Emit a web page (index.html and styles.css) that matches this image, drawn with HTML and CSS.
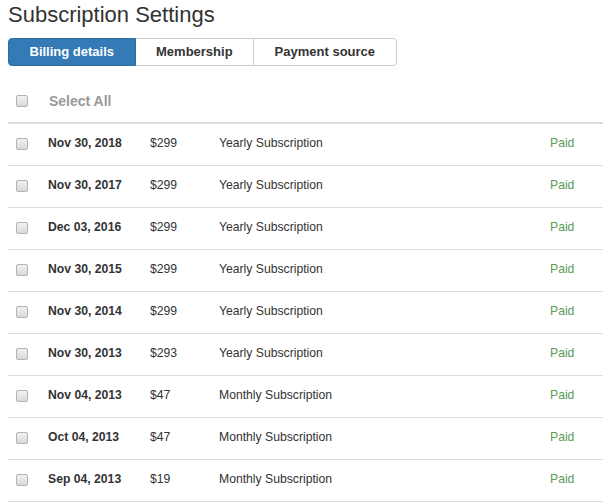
FILE: index.html
```html
<!DOCTYPE html>
<html>
<head>
<meta charset="utf-8">
<link rel="stylesheet" href="styles.css">
</head>
<body>
<h1 class="title">Subscription Settings</h1>
<div class="btn-group">
  <button class="btn btn-active">Billing details</button>
  <button class="btn">Membership</button>
  <button class="btn">Payment source</button>
</div>
<table class="billing">
  <colgroup>
    <col class="c-check">
    <col class="c-date">
    <col class="c-price">
    <col class="c-desc">
    <col class="c-status">
  </colgroup>
  <thead>
    <tr>
      <th class="cell-check"><input type="checkbox" class="cb"></th>
      <th colspan="4" class="select-all">Select All</th>
    </tr>
  </thead>
  <tbody>
    <tr><td class="cell-check"><input type="checkbox" class="cb"></td><td class="date">Nov 30, 2018</td><td>$299</td><td>Yearly Subscription</td><td class="paid">Paid</td></tr>
    <tr><td class="cell-check"><input type="checkbox" class="cb"></td><td class="date">Nov 30, 2017</td><td>$299</td><td>Yearly Subscription</td><td class="paid">Paid</td></tr>
    <tr><td class="cell-check"><input type="checkbox" class="cb"></td><td class="date">Dec 03, 2016</td><td>$299</td><td>Yearly Subscription</td><td class="paid">Paid</td></tr>
    <tr><td class="cell-check"><input type="checkbox" class="cb"></td><td class="date">Nov 30, 2015</td><td>$299</td><td>Yearly Subscription</td><td class="paid">Paid</td></tr>
    <tr><td class="cell-check"><input type="checkbox" class="cb"></td><td class="date">Nov 30, 2014</td><td>$299</td><td>Yearly Subscription</td><td class="paid">Paid</td></tr>
    <tr><td class="cell-check"><input type="checkbox" class="cb"></td><td class="date">Nov 30, 2013</td><td>$293</td><td>Yearly Subscription</td><td class="paid">Paid</td></tr>
    <tr><td class="cell-check"><input type="checkbox" class="cb"></td><td class="date">Nov 04, 2013</td><td>$47</td><td>Monthly Subscription</td><td class="paid">Paid</td></tr>
    <tr><td class="cell-check"><input type="checkbox" class="cb"></td><td class="date">Oct 04, 2013</td><td>$47</td><td>Monthly Subscription</td><td class="paid">Paid</td></tr>
    <tr><td class="cell-check"><input type="checkbox" class="cb"></td><td class="date">Sep 04, 2013</td><td>$19</td><td>Monthly Subscription</td><td class="paid">Paid</td></tr>
  </tbody>
</table>
</body>
</html>
```

FILE: styles.css
```css
html, body {
  background: #fff;
}
body {
  margin: 0;
  padding: 3px 0 0 8px;
  font-family: "Liberation Sans", Arial, sans-serif;
  color: #333;
  overflow: hidden;
}
.title {
  margin: 0;
  font-size: 22px;
  line-height: 24px;
  font-weight: normal;
  color: #333;
}
.btn-group {
  display: inline-flex;
  margin-top: 11px;
}
.btn {
  font-family: "Liberation Sans", Arial, sans-serif;
  font-size: 13px;
  font-weight: bold;
  line-height: 18px;
  height: 28px;
  padding: 4px 20.5px;
  margin: 0 0 0 -1px;
  border: 1px solid #ccc;
  background: #fff;
  color: #333;
  border-radius: 0;
}
.btn:first-child {
  margin-left: 0;
  border-radius: 4px 0 0 4px;
}
.btn:last-child {
  border-radius: 0 4px 4px 0;
}
.btn-active {
  background: #337ab7;
  border-color: #2e6da4;
  color: #fff;
  position: relative;
}
.billing {
  margin-top: 14px;
  width: 595px;
  border-collapse: collapse;
  table-layout: fixed;
}
.c-check { width: 40px; }
.c-date { width: 102px; }
.c-price { width: 69px; }
.c-desc { width: 331px; }
.c-status { width: 53px; }
.billing th {
  height: 18px;
  padding: 12px 0;
  line-height: 18px;
  text-align: left;
  border-bottom: 2px solid #ddd;
  vertical-align: top;
}
.select-all {
  font-size: 14px;
  font-weight: bold;
  color: #999;
  padding-left: 1px !important;
}
.billing td {
  padding: 11px 0 13px;
  line-height: 17px;
  font-size: 12.2px;
  border-bottom: 1px solid #ddd;
  vertical-align: top;
  white-space: nowrap;
}
.billing .cell-check {
  padding-left: 8px;
}
.cb {
  -webkit-appearance: none;
  appearance: none;
  display: block;
  width: 12px;
  height: 12px;
  margin: 3px 0 2px;
  border: 1px solid #b3b3b3;
  border-radius: 2px;
  background: linear-gradient(#f2f2f2, #d9d9d9);
}
thead .cb {
  margin: 3px 0 3px;
}
.date {
  font-weight: bold;
}
.paid {
  color: #5c9b55;
}
```
